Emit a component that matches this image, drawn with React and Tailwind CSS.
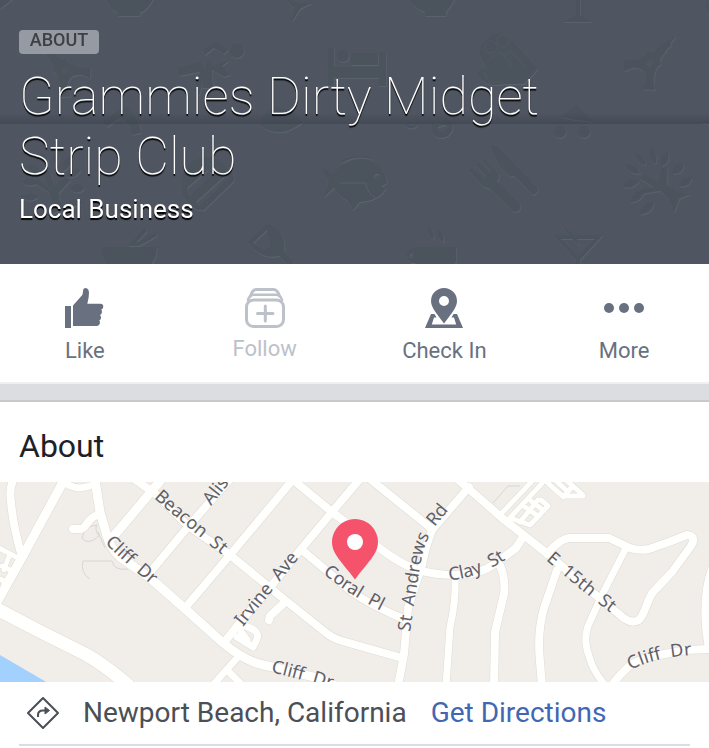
import React from "react";

const roads = [
  { d: "M13 -2Q9 8 11 20Q13 44 22 75", w: 8 },
  { d: "M63 0L25 70L-4 122", w: 9 },
  { d: "M60 -2Q72 6 80 6Q88 5 96 2", w: 7 },
  { d: "M95 -2L100 30L107 54Q110 66 120 75L150 96L183 125L222 160Q238 174 256 181Q266 184 277 186L318 196L345 208", w: 9 },
  { d: "M97 33C88 36 86 46 81 47L73 47", w: 8 },
  { d: "M161 -2L150 11L113 55", w: 9 },
  { d: "M229 -2L187 46L152 88", w: 8 },
  { d: "M291 0L230 73L185 126", w: 8 },
  { d: "M359 -2L332 30L302 66L272 103L242 138L226 158", w: 8 },
  { d: "M133 -4L157 13L187 43L230 73L285 118L325 150Q332 156 342 159L402 176", w: 8 },
  { d: "M292 -3L332 30L378 65Q402 83 418 88Q435 93 455 93Q480 93 496 81L516 66L523 55", w: 8 },
  { d: "M302 68L352 110Q376 126 404 137", w: 8 },
  { d: "M370 -3L432 47", w: 8 },
  { d: "M469 5L432 48Q425 66 422 83L408 126L404 172L398 204", w: 8 },
  { d: "M456 -4L469 7L502 36L549 73L599 116L619 132Q630 143 639 138C645 132 647 118 653 110L672 90L691 64Q697 54 687 53L669 60L649 67Q639 69 630 66L609 56L570 56Q561 56 547 72", w: 8 },
  { d: "M626 66L602 113L588 144Q583 158 589 174Q592 187 604 202", w: 7 },
  { d: "M557 88L544 126Q537 150 540 180L542 204", w: 8 },
  { d: "M499 81Q506 96 504 112L495 150L494 204", w: 8 },
  { d: "M455 95Q456 120 450 145L446 204", w: 7 },
  { d: "M612 203Q625 186 634 181Q646 175 659 173L686 168L712 167", w: 8 },
  { d: "M713 84Q700 118 709 166", w: 8 },
  { d: "M-5 126L43 151L85 172Q102 181 128 203", w: 13 },
  { d: "M-3 65L20 77M9 74L4 88M2 84L14 90M22 78L4 101M-2 96L8 101", w: 5 },
  { d: "M285 120L270 134L269 138", w: 8 },
  { d: "M238 175L212 204M228 189L244 205", w: 7 },
  { d: "M240 141L254 148Q259 152 257 157L253 165L237 155M240 148L247 158", w: 7 },
  { d: "M534 -3L501 32M546 -3L508 38M538 18L520 40M513 37L530 43L548 24L541 18M525 25L538 34M531 19L543 28", w: 5 },
  { d: "M545 -2Q557 10 563 14L583 14M566 -2L583 13M554 -3L567 9M572 5L563 15", w: 5 },
];

const labels = [
  { id: "cliff-a", text: "Cliff\u00a0 Dr", d: "M105 61Q127 84 180 126" },
  { id: "beacon", text: "Beacon\u00a0 St", d: "M154 16Q186 45 250 95" },
  { id: "alis", text: "Alis", d: "M211 24L241 -14" },
  { id: "irvine", text: "Irvine\u00a0 Ave", d: "M243 145L318 52" },
  { id: "coral", text: "Coral\u00a0 Pl", d: "M323 91Q350 115 400 138" },
  { id: "andrews", text: "St\u00a0 Andrews\u00a0 Rd", d: "M410 150L420 84Q425 56 437 42L475 -4" },
  { id: "clay", text: "Clay\u00a0 St", d: "M449 98Q484 97 527 62" },
  { id: "fifteenth", text: "E\u00a0 15th\u00a0 St", d: "M546 78Q582 110 640 153" },
  { id: "cliff-b", text: "Cliff\u00a0 Dr", d: "M631 188Q657 173 715 172" },
  { id: "cliff-c", text: "Cliff\u00a0 Dr", d: "M271 190Q304 198 360 215" },
];

function Emboss() {
  return (
    <svg
      className="absolute inset-0 h-full w-full"
      viewBox="0 0 709 264"
      preserveAspectRatio="xMidYMid slice"
      aria-hidden="true"
    >
      <defs>
        <filter id="emboss" x="-5%" y="-5%" width="110%" height="110%">
          <feDropShadow dx="0.6" dy="1" stdDeviation="0.4" floodColor="#616773" floodOpacity="0.7" />
        </filter>
        <linearGradient id="seam" x1="0" y1="0" x2="0" y2="1">
          <stop offset="0" stopColor="#3d434e" stopOpacity="0" />
          <stop offset="1" stopColor="#3d434e" stopOpacity="0.6" />
        </linearGradient>
        <g id="tower">
          <path d="M0 -36L1.500 -26L3.500 -24L3 -20L5 -6L9 -4L8 1Q12 14 22 19L13 27Q10 14 0 13Q-10 14 -13 27L-22 19Q-12 14 -8 1L-9 -4L-5 -6L-3 -20L-3.500 -24L-1.500 -26Z" />
          <path d="M-4 7L-2 0H2L4 7Z" fill="#505661" />
        </g>
        <g id="tree">
          <path d="M-5 34Q2 20 -1 12L-18 1L-12 0L-3 6L-7 -8L-1 -7L3 5L13 -2L18 0L7 12Q8 24 17 32L7 28Z" />
          <path d="M-27 2Q-18 -5 -12 3Q-20 8 -27 2ZM-28 15Q-17 9 -12 16Q-20 22 -28 15ZM-23 -13Q-13 -16 -9 -7Q-19 -4 -23 -13ZM-9 -25Q0 -20 -4 -11Q-12 -16 -9 -25ZM5 -27Q10 -18 4 -13Q-1 -20 5 -27ZM18 -22Q20 -12 11 -8Q9 -17 18 -22ZM27 -9Q22 0 14 -3Q17 -12 27 -9ZM17 8Q25 0 30 8Q24 15 17 8ZM14 20Q23 14 27 22Q20 27 14 20Z" />
        </g>
      </defs>
      <g fill="#4c525d" stroke="none" filter="url(#emboss)">
        <path d="M0 -2H14L0 9ZM105 -4H155Q148 10 140 13V16H118V13Q109 9 105 -4ZM283 -4L297 3L312 3L300 9L292 22L294 8ZM408 -4H456Q450 8 446 12V16H425V12Q412 8 408 -4ZM576 -4H580V16Q588 18 592 22H563Q570 18 576 16ZM709 0V14L705 6Z" />
        <use href="#tower" transform="translate(62 68) rotate(-43)" />
        <path d="M203 50L215 42L228 50L224 54L214 48L205 55ZM177 68L202 62L206 70L199 96L194 91L200 72L179 76ZM207 60L214 66L230 60L222 66L230 75L224 77L212 70L213 88L202 88Z" />
        <circle cx="237" cy="51" r="7" />
        <path d="M328 48H334V67H379V52H386V86H379V78H334V86H328ZM351 53H375Q378 53 378 56V65H351Z" />
        <circle cx="343" cy="56" r="6" />
        <path d="M481 58Q477 45 488 40Q493 30 507 35L538 69L524 84H505L498 85Q482 86 478 74Q481 68 487 68Z" />
        <g fill="none" stroke="#505661" strokeWidth="2" strokeLinecap="round">
          <circle cx="491" cy="47" r="6" />
          <circle cx="503" cy="41" r="6" />
          <path d="M488 61L500 52L513 67M504 56L511 51L526 67M484 73L490 83L500 82" />
        </g>
        <use href="#tower" transform="translate(652 61) rotate(43)" />
        <path d="M102 122L126 106Q139 116 141 133L132 135Q129 120 119 119L107 127ZM260 125Q267 104 281 108Q297 112 303 122Q288 134 276 132Q266 131 260 125Z" />
        <path fillRule="evenodd" d="M432 124Q429 136 440 138Q452 138 453 125L446 117L440 125ZM438 127Q439 134 444 132Q450 128 445 125Z" />
        <path d="M403 124Q411 133 419 124L412 126ZM562 117L577 105L594 123L586 121L575 120ZM700 123L707 118L712 124Z" />
        <circle cx="560" cy="132" r="6" />
        <circle cx="584" cy="132" r="6" />
        <use href="#tree" transform="translate(51 180) scale(1.1)" />
        <path fillRule="evenodd" d="M181 181Q184 160 206 157Q219 158 226 166Q235 174 234 181L204 210Q195 212 187 202Q181 196 181 181ZM187 188L208 170L212 174L190 196ZM196 202L227 174L229 178L200 206Z" />
        <path fillRule="evenodd" d="M321 168L333 175Q338 167 346 163Q358 158 370 161Q385 167 387 183L381 187L386 188Q379 201 360 202L353 210L348 201Q339 196 334 188L324 197L329 183ZM340 160Q354 156 368 156L373 160Q358 154 342 163ZM374 177A3 3 0 1 0 380 177A3 3 0 1 0 374 177Z" />
        <path d="M340 183H366Q367 193 375 198" fill="none" stroke="#5a606b" strokeWidth="1" />
        <path d="M469 171L472 168L484 179L486 176L476 165L479 163L490 173L492 171L482 161L485 160L498 173Q500 178 497 182L520 204Q522 212 514 212L489 188Q483 188 481 184ZM491 147Q495 144 500 149L537 187Q540 193 533 195L514 176L510 177Q497 167 491 147Z" />
        <use href="#tree" transform="translate(652 180) rotate(-42) scale(1.15)" />
        <path d="M101 247H157Q157 260 148 268H109Q102 260 101 247ZM128 246L145 228L147 231L136 243L156 233L157 236L139 246Z" />
        <path fillRule="evenodd" d="M248 242L267 224Q287 232 284 251L294 263L290 267L279 256Q260 260 248 242ZM253 243L267 230L271 247L263 251Z" />
        <path fillRule="evenodd" d="M415 247H456V262L453 268H417L415 263H411Q402 253 411 249ZM413 253Q407 255 411 259H414Z" />
        <path d="M428 227Q436 234 433 240Q426 233 428 227ZM438 230Q446 235 443 243Q436 236 438 230Z" />
        <path fillRule="evenodd" d="M553 235H569L560 223L574 235H603L580 260V268H576V260ZM561 239L578 256L595 239H577L580 246L572 239Z" />
      </g>
      <rect x="0" y="113" width="709" height="11" fill="url(#seam)" />
    </svg>
  );
}

function LikeIcon() {
  return (
    <svg width="40" height="40" viewBox="0 0 40 40" fill="currentColor" aria-hidden="true">
      <path d="M0 18H6V40H0Z" />
      <path d="M8 38V17.5L17.3 7Q18 5.5 18 3Q18.2 0 20.6 0Q24 0.4 24 5Q24 9.500 22.300 15.700H35.500Q38.300 16 38.300 18.500Q38.300 20.800 36.300 21.600Q37.400 23 36.800 25Q36.300 26.600 35 27Q36.600 28.500 35.900 30.500Q35.500 31.900 34.300 32.400Q35.400 33.800 34.900 35.600Q34.200 38 32 38Z" />
    </svg>
  );
}

function FollowIcon() {
  return (
    <svg width="40" height="40" viewBox="0 0 40 40" fill="none" stroke="currentColor" strokeWidth="3" strokeLinecap="round" aria-hidden="true">
      <rect x="1.500" y="12" width="37" height="26.500" rx="7" />
      <path d="M3 12Q4.500 6.700 9 6.700H31Q35.500 6.700 37 12" strokeWidth="2.600" />
      <path d="M5.500 8Q7.500 1.500 11.500 1.500H28.500Q32.500 1.500 34.500 8" />
      <path d="M12.500 25.500H28M20.300 18V33" />
    </svg>
  );
}

function CheckInIcon() {
  return (
    <svg width="38" height="40" viewBox="0 0 38 40" fill="currentColor" aria-hidden="true">
      <path fillRule="evenodd" d="M19 0A13 13 0 0 1 32 13C32 20 25 27 19 35.500C13 27 6 20 6 13A13 13 0 0 1 19 0ZM19 8A5 5 0 1 0 19 18A5 5 0 1 0 19 8Z" />
      <path d="M6 26H9.500L11.500 29.500H9L6.800 36.500H31.200L29 29.500H26.500L28.500 26H32L38 40H0Z" />
    </svg>
  );
}

function MoreIcon() {
  return (
    <svg width="40" height="40" viewBox="0 0 40 40" fill="currentColor" aria-hidden="true">
      <circle cx="5" cy="20" r="5" />
      <circle cx="20" cy="20" r="5" />
      <circle cx="35" cy="20" r="5" />
    </svg>
  );
}

function Action({ icon, label, muted = false }) {
  return (
    <button
      type="button"
      className={`flex flex-col items-center pt-6 ${muted ? "gap-1 text-[#bdc1c9]" : "gap-1.5 text-[#697180]"}`}
    >
      {icon}
      <span className="text-[22px] leading-[34px]">{label}</span>
    </button>
  );
}

function StreetMap() {
  return (
    <svg
      className="block h-[200px] w-full bg-[#f1ede8]"
      viewBox="0 0 709 200"
      preserveAspectRatio="xMidYMid slice"
      role="img"
      aria-label="Map of Newport Beach"
    >
      <path d="M0 173L48 201H0Z" fill="#a3d1fd" />
      <g fill="none" stroke="#d9d6d1" strokeWidth="1">
        <path d="M97 43Q84 44 82 56Q88 64 99 54Q94 47 97 43M98 50L105 66M112 79H83Q80 91 90 97M112 79Q114 89 128 87M493 21L508 4H520" />
      </g>
      <g fill="none" stroke="#dedbd4" strokeLinejoin="round" strokeLinecap="round">
        {roads.map((r) => (
          <path key={r.d} d={r.d} strokeWidth={r.w + 1} />
        ))}
      </g>
      <g fill="none" stroke="#fffffe" strokeLinejoin="round" strokeLinecap="round">
        {roads.map((r) => (
          <path key={r.d} d={r.d} strokeWidth={r.w} />
        ))}
      </g>
      <g className="font-['Noto_Sans','Open_Sans',sans-serif] text-[18px]" fill="#5f6069" stroke="#f8f6f3" strokeWidth="1" paintOrder="stroke">
        {labels.map((l) => (
          <React.Fragment key={l.id}>
            <path id={l.id} d={l.d} fill="none" stroke="none" />
            <text>
              <textPath href={`#${l.id}`}>{l.text}</textPath>
            </text>
          </React.Fragment>
        ))}
      </g>
      <path
        fillRule="evenodd"
        fill="#f5536b"
        d="M355 37A23 23 0 0 1 378 60C378 72 368 80 355 97.500C342 80 332 72 332 60A23 23 0 0 1 355 37Z"
      />
      <circle cx="355" cy="60" r="8" fill="#ffffff" />
    </svg>
  );
}

export default function App() {
  return (
    <main className="min-h-screen overflow-hidden bg-white font-['Roboto',sans-serif]">
      <header className="relative bg-[#505661]">
        <Emboss />
        <div className="relative px-[19px] pt-[30px] pb-9 text-white [text-shadow:0_2px_1px_#000000]">
          <span className="block h-6 w-20 rounded bg-[#969aa2] text-center text-lg leading-5 font-medium text-[#3d4045] [text-shadow:none]">
            ABOUT
          </span>
          <h1 className="mt-[13px] max-w-[600px] text-[52px] leading-[60px] font-thin">
            Grammies Dirty Midget Strip Club
          </h1>
          <p className="mt-1 text-[26px] leading-9 mb-px">Local Business</p>
        </div>
      </header>

      <nav className="-mx-[5px] grid h-[118px] grid-cols-4" aria-label="Page actions">
        <Action icon={<LikeIcon />} label="Like" />
        <Action icon={<FollowIcon />} label="Follow" muted />
        <Action icon={<CheckInIcon />} label="Check In" />
        <Action icon={<MoreIcon />} label="More" />
      </nav>

      <div className="h-5 border-t-2 border-b-2 border-t-[#efeff0] border-b-[#c9c9cb] bg-[#dcdde1]" />

      <section>
        <h2 className="px-[19px] pt-6 pb-4 text-[32px] leading-10 text-[#1d2129]">About</h2>
        <StreetMap />
        <div className="mx-[19px] flex h-16 items-center border-b-2 border-[#dcdde2] pl-[7px] text-[28px] text-[#4b4f56]">
          <svg width="34" height="34" viewBox="0 0 34 34" fill="none" stroke="currentColor" strokeWidth="2" strokeLinejoin="round" aria-hidden="true">
            <path d="M17 2L32 17L17 32L2 17Z" />
            <path d="M12 21V19Q12 14.500 17 14.500H20" />
            <path d="M19 11L23.500 14.500L19 18Z" fill="currentColor" strokeWidth="1" />
          </svg>
          <span className="ml-[23px]">Newport Beach, California</span>
          <a href="#directions" className="ml-6 text-[#4267b2]">Get Directions</a>
        </div>
      </section>
    </main>
  );
}
